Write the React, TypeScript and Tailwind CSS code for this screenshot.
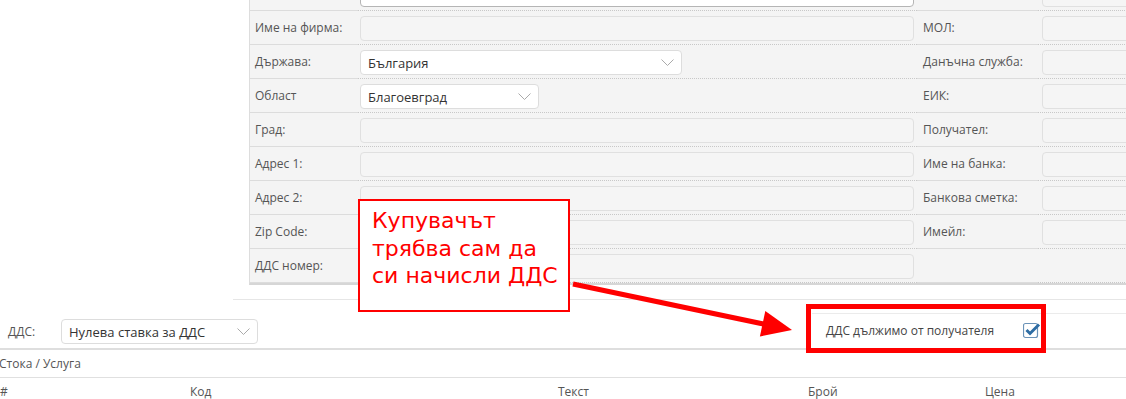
import React from 'react';

const Chevron = () => (
  <svg width="13" height="8" viewBox="0 0 13 8" className="shrink-0">
    <polyline points="0.5,0.5 6.5,6.5 12.5,0.5" fill="none" stroke="#aaa" strokeWidth="1" />
  </svg>
);

function Select({ value, width }: { value: string; width: string }) {
  return (
    <div className={`${width} h-[25px] bg-white border border-[#ddd] rounded-[4px] flex items-center pl-[7px] pr-[7px] text-[13px] text-[#333]`}>
      <span className="flex-1 truncate pt-[3px]">{value}</span>
      <Chevron />
    </div>
  );
}

const Field = ({ white = false }: { white?: boolean }) => (
  <div
    className={`w-full h-[25px] rounded-[4px] border ${
      white ? 'bg-white border-[#b5b5b5]' : 'bg-[#f5f5f5] border-[#e0e0e0]'
    }`}
  />
);

type Row = {
  label: string;
  input: React.ReactNode;
  label2: string;
  input2: boolean;
};

const rows: Row[] = [
  { label: '', input: <Field white />, label2: '', input2: true },
  { label: 'Име на фирма:', input: <Field />, label2: 'МОЛ:', input2: true },
  { label: 'Държава:', input: <Select value="България" width="w-[322px]" />, label2: 'Данъчна служба:', input2: true },
  { label: 'Област', input: <Select value="Благоевград" width="w-[179px]" />, label2: 'ЕИК:', input2: true },
  { label: 'Град:', input: <Field />, label2: 'Получател:', input2: true },
  { label: 'Адрес 1:', input: <Field />, label2: 'Име на банка:', input2: true },
  { label: 'Адрес 2:', input: <Field />, label2: 'Банкова сметка:', input2: true },
  { label: 'Zip Code:', input: <Field />, label2: 'Имейл:', input2: true },
  { label: 'ДДС номер:', input: <Field />, label2: '', input2: false },
];

export default function App() {
  return (
    <div className="relative w-[1126px] h-[399px] overflow-hidden bg-white text-[12px] text-[#555] font-['Open_Sans',sans-serif]">
      {/* Buyer form panel */}
      <div className="ml-[233px] pb-[14px] border-b border-[#e6e6e6]">
        <div className="ml-[16px] -mt-[23px] w-[900px] bg-[#f4f4f4] border-l border-[#ddd] border-b-2 border-b-[#d6d6d6]">
          {rows.map((r, i) => (
            <div key={i} className="flex h-[34px]">
              <div className="w-[108px] shrink-0 border-b border-[#dcdcdc] pl-[5px] pt-[1px] flex items-center">
                {r.label}
              </div>
              <div className="w-[559px] shrink-0 border-b border-dotted border-[#c8c8c8] pl-[2px] pr-[3px] pt-[5px]">
                {r.input}
              </div>
              <div className="w-[121px] shrink-0 border-b border-[#dcdcdc] pl-[6px] pt-[1px] flex items-center">
                {r.label2}
              </div>
              <div className="flex-1 border-b border-dotted border-[#c8c8c8] pl-[4px] pt-[5px]">
                {r.input2 && <Field />}
              </div>
            </div>
          ))}
        </div>
      </div>

      {/* VAT row */}
      <div className="flex h-[50px] border-b-2 border-[#dedede]">
        <div className="flex items-center h-[25px] mt-[19px]">
          <span className="pl-[8px] w-[61px]">ДДС:</span>
          <Select value="Нулева ставка за ДДС" width="w-[197px]" />
        </div>
        <div className="ml-auto self-end w-[314px] h-[35px] border-t border-[#ebebeb] flex items-center pl-[14px]">
          <span className="w-[197px] text-[#444]">ДДС дължимо от получателя</span>
          <svg width="18" height="18" viewBox="0 0 18 18" className="mt-[-2px]">
            <rect x="0.5" y="2.5" width="14" height="14" rx="2" fill="white" stroke="#6b93b8" strokeWidth="1.2" />
            <path d="M3.5 9 L7 12.5 L16 3.5" fill="none" stroke="#2e6da4" strokeWidth="3" strokeLinejoin="miter" />
          </svg>
        </div>
      </div>

      {/* Items */}
      <div className="h-[28px] border-b border-[#e0e0e0] flex items-center -ml-[1px]">Стока / Услуга</div>
      <div className="grid grid-cols-[190px_368px_250px_177px_1fr] h-[28px] items-center">
        <span>#</span>
        <span>Код</span>
        <span>Текст</span>
        <span>Брой</span>
        <span>Цена</span>
      </div>

      {/* Annotation callout */}
      <div className="absolute left-[358px] top-[199px] w-[212px] h-[113px] bg-white border-2 border-[#ff0000] pl-[12px] pt-[6px] text-[#ff0000] text-[22px] leading-[27.5px] font-['DejaVu_Sans',sans-serif]">
        Купувачът
        <br />
        трябва сам да
        <br />
        си начисли ДДС
      </div>

      {/* Arrow */}
      <svg className="absolute left-0 top-0 pointer-events-none" width="1126" height="399">
        <line x1="573" y1="284" x2="766" y2="324.5" stroke="#ff0000" strokeWidth="5" />
        <polygon points="792,330 765.3,311.1 759.9,336.5" fill="#ff0000" />
      </svg>

      {/* Highlight box */}
      <div className="absolute left-[806px] top-[304px] w-[240px] h-[49px] border-[5px] border-[#ff0000]" />
    </div>
  );
}
